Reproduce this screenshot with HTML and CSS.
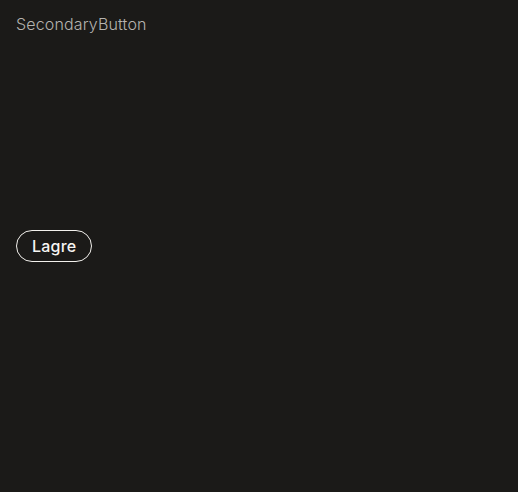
FILE: index.html
```html
<!DOCTYPE html>
<html>
<head>
<meta charset="utf-8">
<link rel="stylesheet" href="styles.css">
</head>
<body>
<div class="page">
  <div class="title">SecondaryButton</div>
  <div class="stage">
    <button class="btn-secondary">Lagre</button>
  </div>
</div>
</body>
</html>
```
FILE: styles.css
```css
html, body {
  margin: 0;
  height: 100%;
  background: #1b1a18;
}
.page {
  box-sizing: border-box;
  height: 100vh;
  padding: 12px 16px;
  display: flex;
  flex-direction: column;
  font-family: Inter, "Liberation Sans", sans-serif;
}
.title {
  font-size: 16px;
  line-height: 24px;
  font-weight: 300;
  letter-spacing: 0.15px;
  color: #b5b3af;
}
.stage {
  flex: 1;
  display: flex;
  align-items: center;
  padding-bottom: 24px;
}
.btn-secondary {
  box-sizing: border-box;
  height: 32px;
  padding: 0 15px;
  border: 1px solid #f2f0ec;
  border-radius: 16px;
  background: transparent;
  color: #f7f5f2;
  font-family: Inter, "Liberation Sans", sans-serif;
  font-size: 16px;
  font-weight: 500;
  letter-spacing: 0.2px;
  line-height: 30px;
}
```
